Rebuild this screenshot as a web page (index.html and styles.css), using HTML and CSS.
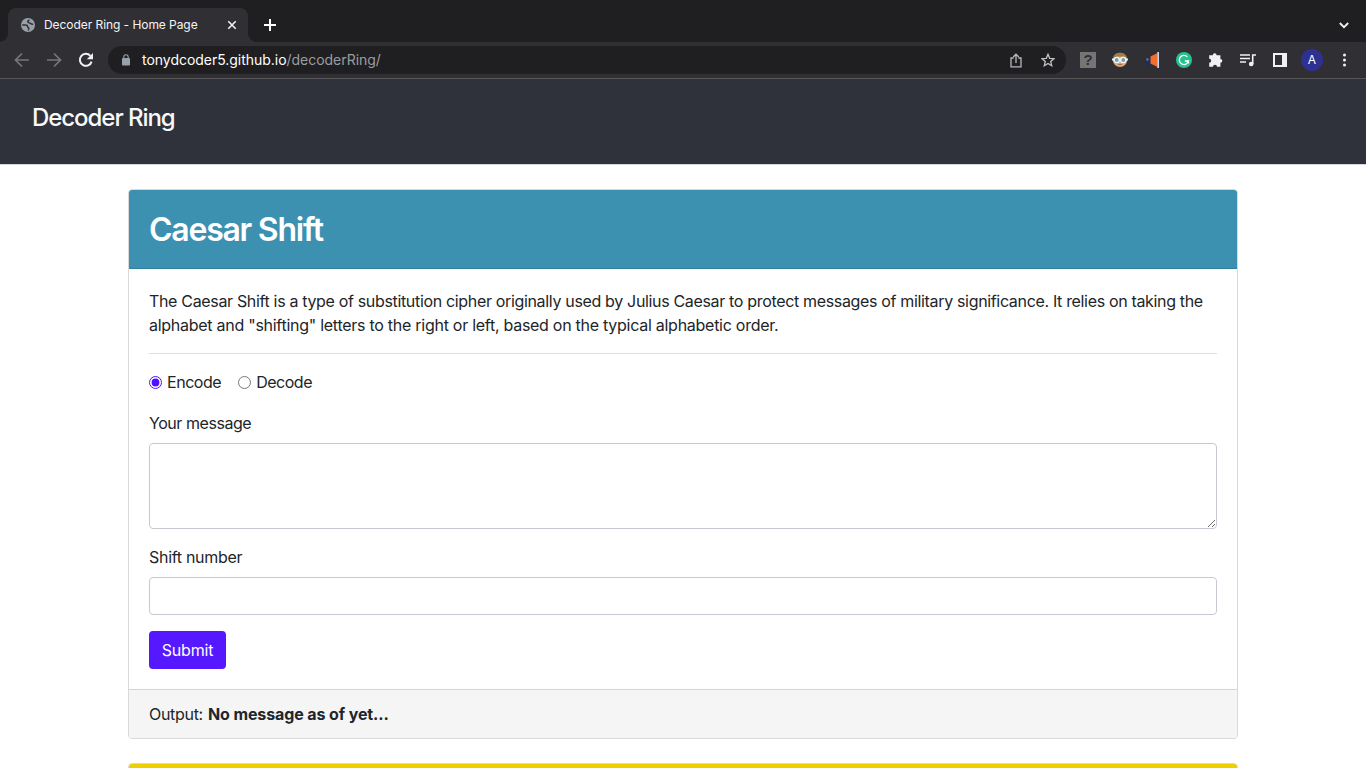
FILE: index.html
```html
<!DOCTYPE html>
<html lang="en">
<head>
<meta charset="utf-8">
<title>Decoder Ring - Home Page</title>
<link rel="stylesheet" href="styles.css">
</head>
<body>
<div class="tabstrip">
  <div class="tab">
    <svg class="globe" width="14" height="14" viewBox="0 0 14 14"><circle cx="7" cy="7" r="7" fill="#9aa0a8"/><path d="M1.200 7h3.300c1.500 0 2 .6 2 1.500 0 .8.600 1 1.200 1.300.5.400.2 1.400-.5 2.700M8.200 1.600c-.3 1-1.500 1-1.500 1.900 0 1.200 1.400 1.200 2.300 1.700.8.500 1.400 1.200 3.200 1" fill="none" stroke="#302f34" stroke-width="1.500"/></svg>
    <span class="tab-title">Decoder Ring - Home Page</span>
    <svg class="close" width="10" height="10" viewBox="0 0 10 10"><path d="M1.300 1.300l7.400 7.400M8.700 1.300L1.300 8.700" stroke="#f1f1f3" stroke-width="1.600"/></svg>
  </div>
  <svg class="plus" width="12" height="12" viewBox="0 0 12 12"><path d="M6 0v12M0 6h12" stroke="#fff" stroke-width="2"/></svg>
  <svg class="chevron" width="10" height="7" viewBox="0 0 10 7"><path d="M.8 1L5 5.200 9.200 1" fill="none" stroke="#f1f1f3" stroke-width="1.800"/></svg>
</div>
<div class="toolbar">
  <svg class="nav" width="16" height="16" viewBox="0 0 16 16"><path d="M15 8H2M8 1.500L1.500 8 8 14.500" fill="none" stroke="#77777b" stroke-width="1.700"/></svg>
  <svg class="nav" width="16" height="16" viewBox="0 0 16 16"><path d="M1 8h13M8 1.500L14.500 8 8 14.500" fill="none" stroke="#77777b" stroke-width="1.700"/></svg>
  <svg class="nav" width="16" height="16" viewBox="0 0 16 16"><path d="M13.600 9.600A6 6 0 1 1 12.400 3.900" fill="none" stroke="#f1f1f3" stroke-width="2"/><path d="M15 1v6.200H8.800z" fill="#f1f1f3"/></svg>
  <div class="omnibox">
    <svg class="lock" width="8" height="12" viewBox="0 0 8 12"><rect y="4" width="8" height="7.500" rx="1" fill="#9aa0a8"/><path d="M1.800 4.500V3a2.200 2.200 0 0 1 4.400 0v1.500" fill="none" stroke="#9aa0a8" stroke-width="1.100"/></svg>
    <span class="url"><span class="host">tonydcoder5.github.io</span>/decoderRing/</span>
    <svg class="share" width="12" height="15" viewBox="0 0 12 15"><path d="M3.600 5H1v8.800h10V5H8.400M6 10V1.500M3.200 4L6 1.200 8.800 4" fill="none" stroke="#b9b9bd" stroke-width="1.300"/></svg>
    <svg class="star" width="14" height="14" viewBox="0 0 14 14"><path d="M7 1.300l1.700 4 4.300.4-3.300 2.800 1 4.200L7 10.500l-3.700 2.200 1-4.200L1 5.700l4.300-.4z" fill="none" stroke="#c4c4c8" stroke-width="1.300"/></svg>
  </div>
  <div class="extensions">
    <span class="unknown">?</span>
    <svg width="16" height="16" viewBox="0 0 16 16"><circle cx="8" cy="8" r="7.100" fill="#d8a878"/><path d="M1 7C1 2.800 4 .8 8 .8s7 2 7 6.200L12 4.600H5z" fill="#9b7e48"/><path d="M0 6.500h16v2H0z" fill="#e8eef2"/><circle cx="4.700" cy="8" r="2.600" fill="#6f9fb4" stroke="#f4f6f8" stroke-width="1.300"/><circle cx="11.300" cy="8" r="2.600" fill="#6f9fb4" stroke="#f4f6f8" stroke-width="1.300"/><path d="M6 12.500h4" stroke="#a86d50"/></svg>
    <svg width="16" height="16" viewBox="0 0 16 16"><path d="M1 5.500L6.500 4.500v7H4.800l.8 4H3.200l-1-4.500L1 10z" fill="#202c5c"/><circle cx="3.400" cy="7.500" r="1.400" fill="#5a688c"/><path d="M6.500 4.500l7-3.500v14l-7-3.500z" fill="#f36d2c"/><path d="M13.300 0H15v16h-1.700z" fill="#c4d5ee"/></svg>
    <svg width="16" height="16" viewBox="0 0 16 16"><circle cx="8" cy="8" r="8" fill="#27c18d"/><path d="M11.300 4.900A4.600 4.600 0 1 0 12.400 9H8.800M12.400 8.600v3" fill="none" stroke="#fff" stroke-width="1.300"/></svg>
    <svg width="16" height="16" viewBox="0 0 16 16"><path d="M1.200 3.200h3.600a1.900 1.900 0 1 1 3.800 0h3.800v3.700a1.900 1.900 0 1 1 0 3.800v4H9a2 2 0 0 0-4 0H1.200v-3.900a2 2 0 0 0 0-4z" fill="#f1f1f3"/></svg>
    <svg width="16" height="16" viewBox="0 0 16 16"><path d="M0 3h10M0 6.500h10M0 10h6M12.700 12V3H16" fill="none" stroke="#f1f1f3" stroke-width="1.600"/><circle cx="11.200" cy="12" r="2.300" fill="#f1f1f3"/></svg>
    <svg width="16" height="16" viewBox="0 0 16 16"><path d="M1 1h14v14H1zM3 3v10h7V3z" fill="#f1f1f3" fill-rule="evenodd"/></svg>
    <span class="avatar">A</span>
    <svg width="16" height="16" viewBox="0 0 16 16" fill="#f1f1f3"><circle cx="8.500" cy="3" r="1.500"/><circle cx="8.500" cy="8" r="1.500"/><circle cx="8.500" cy="13" r="1.500"/></svg>
  </div>
</div>
<header class="site-header"><h1 class="brand">Decoder Ring</h1></header>
<main class="container">
  <section class="card">
    <div class="card-header"><h2 class="card-title">Caesar Shift</h2></div>
    <div class="card-body">
      <p class="intro">The Caesar Shift is a type of substitution cipher originally used by Julius Caesar to protect messages of military significance. It relies on taking the<br><span class="intro-end">alphabet and "shifting" letters to the right or left, based on the typical alphabetic order.</span></p>
      <hr class="rule">
      <form class="form">
        <div class="options">
          <label class="option"><input class="radio" type="radio" name="mode" checked>Encode</label>
          <label class="option"><input class="radio" type="radio" name="mode">Decode</label>
        </div>
        <label class="label label-message" for="message">Your message</label>
        <textarea class="control message" id="message"></textarea>
        <label class="label" for="shift">Shift number</label>
        <input class="control shift" id="shift" type="text">
        <button class="submit" type="button">Submit</button>
      </form>
    </div>
    <div class="card-footer"><span class="output-label">Output:</span><strong class="output">No message as of yet...</strong></div>
  </section>
  <section class="card next"><div class="card-header yellow"></div></section>
</main>
</body>
</html>
```
FILE: styles.css
```css
* { box-sizing: border-box; }
html, body { height: 768px; overflow: hidden; }
body { display: flex; flex-direction: column; margin: 0; background: #fff; color: #212529; font: 16px/24px Inter, "Liberation Sans", sans-serif; letter-spacing: -0.3px; }
svg { display: block; flex: none; }
h1, h2, p { margin: 0; }
.tabstrip { flex: none; display: flex; height: 42px; padding: 8px 17px 0 8px; background: #1f1f21; }
.tab { position: relative; display: flex; align-items: center; width: 240px; height: 34px; padding: 0 11px 0 13px; background: #302f34; border-radius: 8px 8px 0 0; font-size: 12px; letter-spacing: -0.06px; color: #f4f4f6; }
.tab::before, .tab::after { content: ""; position: absolute; bottom: 0; width: 8px; height: 8px; }
.tab::before { left: -8px; background: radial-gradient(circle at 0 0, #1f1f21 7.5px, #302f34 8px); }
.tab::after { right: -8px; background: radial-gradient(circle at 100% 0, #1f1f21 7.5px, #302f34 8px); }
.tab-title { margin-left: 9px; white-space: nowrap; }
.close { margin-left: auto; }
.plus { margin: 11px 0 0 16px; }
.chevron { margin: 14px 0 0 auto; }
.toolbar { flex: none; display: flex; align-items: center; height: 37px; padding: 0 14px; background: #302f34; border-bottom: 1px solid #57575a; }
.nav { margin-right: 16px; }
.omnibox { display: flex; align-items: center; width: 958px; height: 28px; margin-left: -2px; padding: 0 11px 0 14px; background: #1f1f21; border-radius: 14px; }
.url { margin-left: 12px; font-size: 14px; letter-spacing: -0.03px; color: #9c9ca0; }
.host { color: #fff; }
.share { margin-left: auto; }
.star { margin-left: 19px; }
.extensions { display: flex; align-items: center; gap: 16px; margin-left: 14px; }
.unknown { width: 16px; height: 16px; background: #757575; color: #302f34; font: bold 15px/16px "Liberation Sans", sans-serif; text-align: center; letter-spacing: 0; }
.avatar { width: 22px; height: 22px; margin: 0 -3px; border-radius: 50%; background: #2e3192; color: #fff; font-size: 12px; line-height: 22px; text-align: center; letter-spacing: 0; }
.site-header { flex: none; height: 86px; padding: 24px 32px; background: #2f323a; border-bottom: 1px solid #d6d7d8; }
.brand { font-size: 24px; font-weight: 550; line-height: 29px; letter-spacing: -1.05px; color: #f8f9fa; }
.container { flex: 1; min-height: 0; width: 1110px; margin: 24px auto 0; overflow: hidden; }
.card { border: 1px solid #d9d9da; border-radius: 4px; overflow: hidden; }
.card-header { height: 79px; padding: 21px 20px 19px; background: #3c91b0; border-bottom: 1px solid #2f7f9d; }
.card-title { font-size: 32px; font-weight: 600; line-height: 38px; letter-spacing: -1.25px; color: #fff; }
.card-body { padding: 20px; }
.intro { white-space: nowrap; letter-spacing: -0.335px; }
.intro-end { letter-spacing: -0.268px; }
.rule { height: 1px; margin: 16px 0; border: 0; background: #dedfe0; }
.options { display: flex; gap: 17px; margin-bottom: 17px; letter-spacing: -0.47px; }
.option { display: flex; align-items: center; }
.radio { width: 13px; height: 13px; margin: 0 5px 0 0; accent-color: #4f10ff; }
.label { display: block; margin-bottom: 8px; }
.label-message { letter-spacing: -0.45px; }
.control { display: block; width: 100%; background: #fff; border: 1px solid #c8c8d2; border-radius: 4px; outline: 0; }
.message { height: 86px; margin-bottom: 16px; resize: vertical; }
.shift { height: 38px; margin-bottom: 16px; }
.submit { display: block; width: 77px; height: 38px; padding: 0; border: 0; border-radius: 4px; background: #5518ff; color: #fff; font: inherit; letter-spacing: -0.2px; }
.card-footer { display: flex; gap: 5px; height: 49px; padding: 12px 20px; background: #f5f5f5; border-top: 1px solid #d4d4d5; }
.output { font-weight: 700; letter-spacing: -0.11px; white-space: nowrap; }
.next { height: 40px; margin-top: 24px; }
.yellow { background: #efcf00; }
```
